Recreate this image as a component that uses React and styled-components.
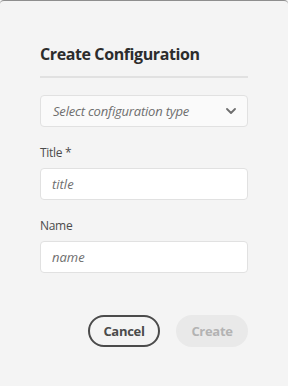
import React from "react";
import styled, { createGlobalStyle } from "styled-components";

const Global = createGlobalStyle`
  html, body { margin: 0; padding: 0; background: #f4f4f4; }
  body { font-family: "Open Sans", "Noto Sans", sans-serif; }
  * { box-sizing: border-box; }
`;

const Dialog = styled.div`
  width: 288px;
  height: 386px;
  background: #f4f4f4;
  border-top: 1px solid #8e8e8e;
  border-radius: 4px 4px 0 0;
  padding: 0 40px;
  display: flex;
  flex-direction: column;
`;

const Heading = styled.h2`
  margin: 42px 0 0;
  font-size: 16px;
  line-height: 22px;
  font-weight: 700;
  color: #2c2c2c;
  letter-spacing: -0.4px;
`;

const Divider = styled.hr`
  margin: 11px 0 0;
  border: none;
  height: 2px;
  background: #e1e1e1;
`;

const Picker = styled.button`
  margin-top: 17px;
  height: 32px;
  width: 100%;
  display: flex;
  align-items: center;
  justify-content: space-between;
  padding: 0 11px 0 12px;
  background: #fafafa;
  border: 1px solid #e1e1e1;
  border-radius: 4px;
  font-family: inherit;
  font-style: italic;
  font-size: 13px;
  color: #6e6e6e;
  letter-spacing: -0.2px;
`;

const Label = styled.label`
  margin-top: ${(p) => p.$top}px;
  font-size: 12px;
  line-height: 16px;
  color: #4b4b4b;
  letter-spacing: -0.3px;
`;

const Input = styled.input`
  margin-top: 7px;
  height: 32px;
  width: 100%;
  padding: 0 11px;
  background: #ffffff;
  border: 1px solid #e1e1e1;
  border-radius: 4px;
  font-family: inherit;
  font-size: 13px;
  outline: none;
  &::placeholder {
    font-style: italic;
    color: #6e6e6e;
  }
`;

const Footer = styled.div`
  margin-top: 42px;
  display: flex;
  justify-content: flex-end;
  gap: 16px;
`;

const Button = styled.button`
  height: 32px;
  width: 72px;
  border-radius: 16px;
  font-family: inherit;
  font-size: 13px;
  font-weight: 700;
  letter-spacing: -0.3px;
  padding: 0;
  border: 2px solid ${(p) => (p.$disabled ? "#e9e9e9" : "#4b4b4b")};
  background: ${(p) => (p.$disabled ? "#e9e9e9" : "transparent")};
  color: ${(p) => (p.$disabled ? "#b3b3b3" : "#4b4b4b")};
`;

const Chevron = () => (
  <svg width="10" height="6" viewBox="0 0 10 6">
    <path d="M1 1l4 4 4-4" fill="none" stroke="#6e6e6e" strokeWidth="1.8" strokeLinecap="round" strokeLinejoin="round" />
  </svg>
);

export default function App() {
  return (
    <>
      <Global />
      <Dialog>
        <Heading>Create Configuration</Heading>
        <Divider />
        <Picker>
          <span>Select configuration type</span>
          <Chevron />
        </Picker>
        <Label $top={18}>Title *</Label>
        <Input placeholder="title" />
        <Label $top={18}>Name</Label>
        <Input placeholder="name" />
        <Footer>
          <Button>Cancel</Button>
          <Button $disabled>Create</Button>
        </Footer>
      </Dialog>
    </>
  );
}
